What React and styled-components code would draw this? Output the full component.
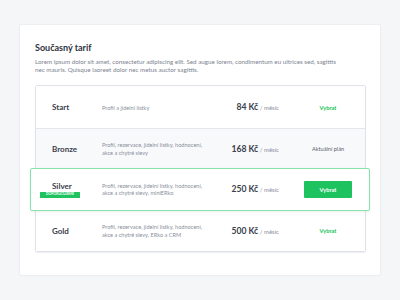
import React from 'react'
import styled, { createGlobalStyle } from 'styled-components'

const GlobalStyle = createGlobalStyle`
  html, body {
    margin: 0;
    padding: 0;
    background: #f5f6f8;
  }
  body {
    font-family: Lato, "Liberation Sans", sans-serif;
    -webkit-font-smoothing: antialiased;
  }
`

const Page = styled.div`
  width: 400px;
  height: 300px;
  padding: 25px 20px;
  box-sizing: border-box;
`

const Card = styled.section`
  width: 360px;
  height: 250px;
  box-sizing: border-box;
  padding: 17px 14px 0 15px;
  background: #fff;
  border-radius: 2px;
  box-shadow: 0 0 0 1px #eceef1, 0 1px 1px rgba(30, 40, 60, 0.08);
`

const Title = styled.h2`
  margin: 0;
  font-size: 9px;
  line-height: 12px;
  font-weight: 700;
  color: #2e3440;
`

const Lead = styled.p`
  margin: 4px 0 0;
  width: 302px;
  font-size: 6.25px;
  line-height: 8px;
  color: #7c8390;
`

const Table = styled.div`
  margin-top: 11px;
  border: 1px solid #dfe2e8;
  border-radius: 2px;
  box-shadow: 0 1px 1px rgba(30, 40, 60, 0.08);
`

const Row = styled.div`
  display: grid;
  grid-template-columns: 50px 110px 1fr 48px;
  align-items: center;
  height: 41.5px;
  box-sizing: border-box;
  padding: 0 13px 0 16px;
  background: ${p => (p.$muted ? '#f8f9fb' : '#fff')};
  border-top: 1px solid ${p => (p.$first ? 'transparent' : '#e3e6eb')};
  ${p =>
    p.$highlight &&
    `
    position: relative;
    z-index: 1;
    margin: -1px -5px -1px -6px;
    height: 42.5px;
    padding: 0 17px 0 21px;
    border: 1px solid #86e3ae;
    border-radius: 2px;
    box-shadow: 0 1px 3px rgba(30, 60, 40, 0.08);
  `}
  ${p => p.$after && 'border-top-color: transparent;'}
`

const NameCell = styled.div`
  display: flex;
  flex-direction: column;
  align-items: flex-start;
`

const Name = styled.div`
  font-size: 8px;
  line-height: 10px;
  font-weight: 700;
  color: #3a404c;
`

const Badge = styled.span`
  display: block;
  margin: 1px 0 0 -12px;
  width: 40px;
  height: 5.5px;
  background: #1ec25f;
  border-radius: 0.5px;
  color: #fff;
  font-size: 3.4px;
  line-height: 5.5px;
  font-weight: 700;
  text-align: center;
`

const Desc = styled.div`
  padding-right: 4px;
  font-size: 5.6px;
  line-height: 7.5px;
  color: #8a909b;
`

const Price = styled.div`
  justify-self: end;
  padding-right: 25px;
  white-space: nowrap;
  font-size: 6px;
  color: #3a404c;
`

const Amount = styled.span`
  font-size: 8.6px;
  font-weight: 700;
`

const Per = styled.span`
  color: #8a909b;
`

const Action = styled.div`
  text-align: center;
  font-size: 5.6px;
  font-weight: 700;
  color: #17c25a;
`

const Current = styled(Action)`
  color: #5a606b;
  font-weight: 400;
`

const Button = styled.button`
  width: 48px;
  height: 17px;
  border: 0;
  border-radius: 1px;
  background: #1ec25f;
  color: #fff;
  font-family: inherit;
  font-size: 5.6px;
  font-weight: 700;
  padding: 0;
`

const plans = [
  { name: 'Start', desc: 'Profil a jídelní lístky', price: '84 Kč', action: 'link' },
  {
    name: 'Bronze',
    desc: 'Profil, rezervace, jídelní lístky, hodnocení, akce a chytré slevy',
    price: '168 Kč',
    action: 'current',
    muted: true,
  },
  {
    name: 'Silver',
    desc: 'Profil, rezervace, jídelní lístky, hodnocení, akce a chytré slevy, miniERko',
    price: '250 Kč',
    action: 'button',
    highlight: true,
  },
  {
    name: 'Gold',
    desc: 'Profil, rezervace, jídelní lístky, hodnocení, akce a chytré slevy, ERko a CRM',
    price: '500 Kč',
    action: 'link',
    after: true,
  },
]

const App = () => (
  <Page>
    <GlobalStyle />
    <Card>
      <Title>Současný tarif</Title>
      <Lead>
        Lorem ipsum dolor sit amet, consectetur adipiscing elit. Sed augue lorem,
        condimentum eu ultrices sed, sagittis nec mauris. Quisque laoreet dolor nec
        metus auctor sagittis.
      </Lead>
      <Table>
        {plans.map((p, i) => (
          <Row
            key={p.name}
            $first={i === 0}
            $muted={p.muted}
            $highlight={p.highlight}
            $after={p.after}
          >
            <NameCell>
              <Name>{p.name}</Name>
              {p.highlight && <Badge>DOPORUČUJEME</Badge>}
            </NameCell>
            <Desc>{p.desc}</Desc>
            <Price>
              <Amount>{p.price}</Amount> <Per>/ měsíc</Per>
            </Price>
            {p.action === 'link' && <Action>Vybrat</Action>}
            {p.action === 'current' && <Current>Aktuální plán</Current>}
            {p.action === 'button' && <Button>Vybrat</Button>}
          </Row>
        ))}
      </Table>
    </Card>
  </Page>
)

export default App
